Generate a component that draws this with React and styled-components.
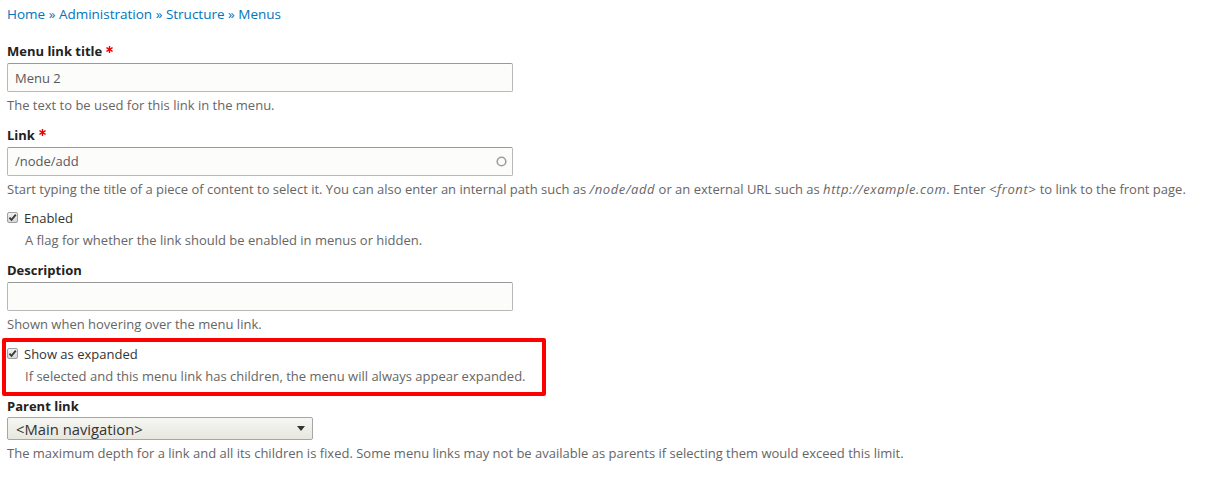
import React from "react";
import styled, { createGlobalStyle } from "styled-components";

const GlobalStyle = createGlobalStyle`
  body {
    margin: 0;
    background: #fff;
    color: #333;
    font-family: "Open Sans", "Liberation Sans", sans-serif;
  }
`;

const Page = styled.div`
  padding: 4px 7px 20px;
`;

const Breadcrumb = styled.nav`
  font-size: 13.5px;
  line-height: 20px;
  color: #0074bd;
  a {
    color: #0074bd;
    text-decoration: none;
  }
`;

const FormItem = styled.div`
  margin-top: ${(p) => p.$gap ?? 12}px;
`;

const Label = styled.label`
  display: flex;
  align-items: center;
  height: 18px;
  font-size: 13px;
  font-weight: 700;
  color: #222;
`;

const Required = styled.svg`
  width: 7px;
  height: 7px;
  margin: -4px 0 0 4px;
`;

const InputWrap = styled.div`
  position: relative;
  width: 506px;
  margin-top: 3px;
`;

const TextInput = styled.div`
  box-sizing: border-box;
  height: 29px;
  padding: 0 7px;
  display: flex;
  align-items: center;
  background: #fcfcfa;
  border: 1px solid #b8b8b8;
  border-top-color: #999;
  border-radius: 2px;
  font-size: 13px;
  color: #595959;
`;

const Throbber = styled.svg`
  position: absolute;
  right: 6px;
  top: 9px;
  width: 11px;
  height: 11px;
`;

const Description = styled.div`
  margin-top: 5px;
  padding-left: ${(p) => p.$indent ?? 0}px;
  font-size: 13px;
  line-height: 17px;
  color: #666;
  em {
    font-style: italic;
    letter-spacing: 0.6px;
  }
`;

const CheckRow = styled.div`
  display: flex;
  align-items: center;
  gap: 6px;
  height: 18px;
  font-size: 13px;
  color: #333;
`;

const CheckBox = styled.svg`
  width: 11px;
  height: 11px;
  flex: none;
  margin-top: -1px;
`;

const Highlight = styled.div`
  box-sizing: border-box;
  width: 544px;
  margin: 5px 0 0 -5px;
  padding: 3px 0 7px 1px;
  border: 4px solid #ff0000;
  border-radius: 2px;
`;

const Select = styled.div`
  box-sizing: border-box;
  width: 306px;
  height: 23px;
  margin-top: 2px;
  padding: 0 7px 0 8px;
  display: flex;
  align-items: center;
  justify-content: space-between;
  background: linear-gradient(to bottom, #f6f6f3, #e7e7df);
  border: 1px solid #a6a6a6;
  border-radius: 2px;
  font-size: 14.8px;
  color: #333;
`;

const Caret = styled.svg`
  width: 8px;
  height: 5px;
`;

function Star() {
  return (
    <Required viewBox="0 0 8 8">
      <g stroke="#e00" strokeWidth="1.6" strokeLinecap="round">
        <line x1="4" y1="0.6" x2="4" y2="7.4" />
        <line x1="1" y1="2.2" x2="7" y2="5.8" />
        <line x1="7" y1="2.2" x2="1" y2="5.8" />
      </g>
    </Required>
  );
}

function Check() {
  return (
    <CheckBox viewBox="0 0 11 11">
      <defs>
        <linearGradient id="cb" x1="0" y1="0" x2="0" y2="1">
          <stop offset="0" stopColor="#f2f2f2" />
          <stop offset="1" stopColor="#d6d6d6" />
        </linearGradient>
      </defs>
      <rect x="0.5" y="0.5" width="10" height="10" rx="1.5" fill="url(#cb)" stroke="#a0a0a0" />
      <path d="M2.4 5.6 L4.5 7.8 L8.8 2.6" fill="none" stroke="#3a3a3a" strokeWidth="1.8" />
    </CheckBox>
  );
}

function CheckItem({ label, children, gap }) {
  return (
    <FormItem $gap={gap}>
      <CheckRow>
        <Check />
        <span>{label}</span>
      </CheckRow>
      <Description $indent={18}>{children}</Description>
    </FormItem>
  );
}

export default function App() {
  return (
    <>
      <GlobalStyle />
      <Page>
        <Breadcrumb>
          <a href="#">Home</a> » <a href="#">Administration</a> »{" "}
          <a href="#">Structure</a> » <a href="#">Menus</a>
        </Breadcrumb>

        <FormItem $gap={18}>
          <Label>
            Menu link title
            <Star />
          </Label>
          <InputWrap>
            <TextInput>Menu 2</TextInput>
          </InputWrap>
          <Description>The text to be used for this link in the menu.</Description>
        </FormItem>

        <FormItem $gap={11.5}>
          <Label>
            Link
            <Star />
          </Label>
          <InputWrap>
            <TextInput>/node/add</TextInput>
            <Throbber viewBox="0 0 11 11">
              <circle cx="5.5" cy="5.5" r="4.3" fill="none" stroke="#9d9d9d" strokeWidth="1.6" />
            </Throbber>
          </InputWrap>
          <Description>
            Start typing the title of a piece of content to select it. You can also enter an
            internal path such as <em>/node/add</em> or an external URL such as{" "}
            <em>http://example.com</em>. Enter <em>&lt;front&gt;</em> to link to the front page.
          </Description>
        </FormItem>

        <CheckItem label="Enabled" gap={11.5}>
          A flag for whether the link should be enabled in menus or hidden.
        </CheckItem>

        <FormItem $gap={12}>
          <Label>Description</Label>
          <InputWrap>
            <TextInput />
          </InputWrap>
          <Description>Shown when hovering over the menu link.</Description>
        </FormItem>

        <Highlight>
          <CheckItem label="Show as expanded" gap={0}>
            If selected and this menu link has children, the menu will always appear expanded.
          </CheckItem>
        </Highlight>

        <FormItem $gap={1}>
          <Label>Parent link</Label>
          <Select>
            <span>&lt;Main navigation&gt;</span>
            <Caret viewBox="0 0 8 5">
              <path d="M0 0 H8 L4 5 Z" fill="#333" />
            </Caret>
          </Select>
          <Description>
            The maximum depth for a link and all its children is fixed. Some menu links may not
            be available as parents if selecting them would exceed this limit.
          </Description>
        </FormItem>
      </Page>
    </>
  );
}
